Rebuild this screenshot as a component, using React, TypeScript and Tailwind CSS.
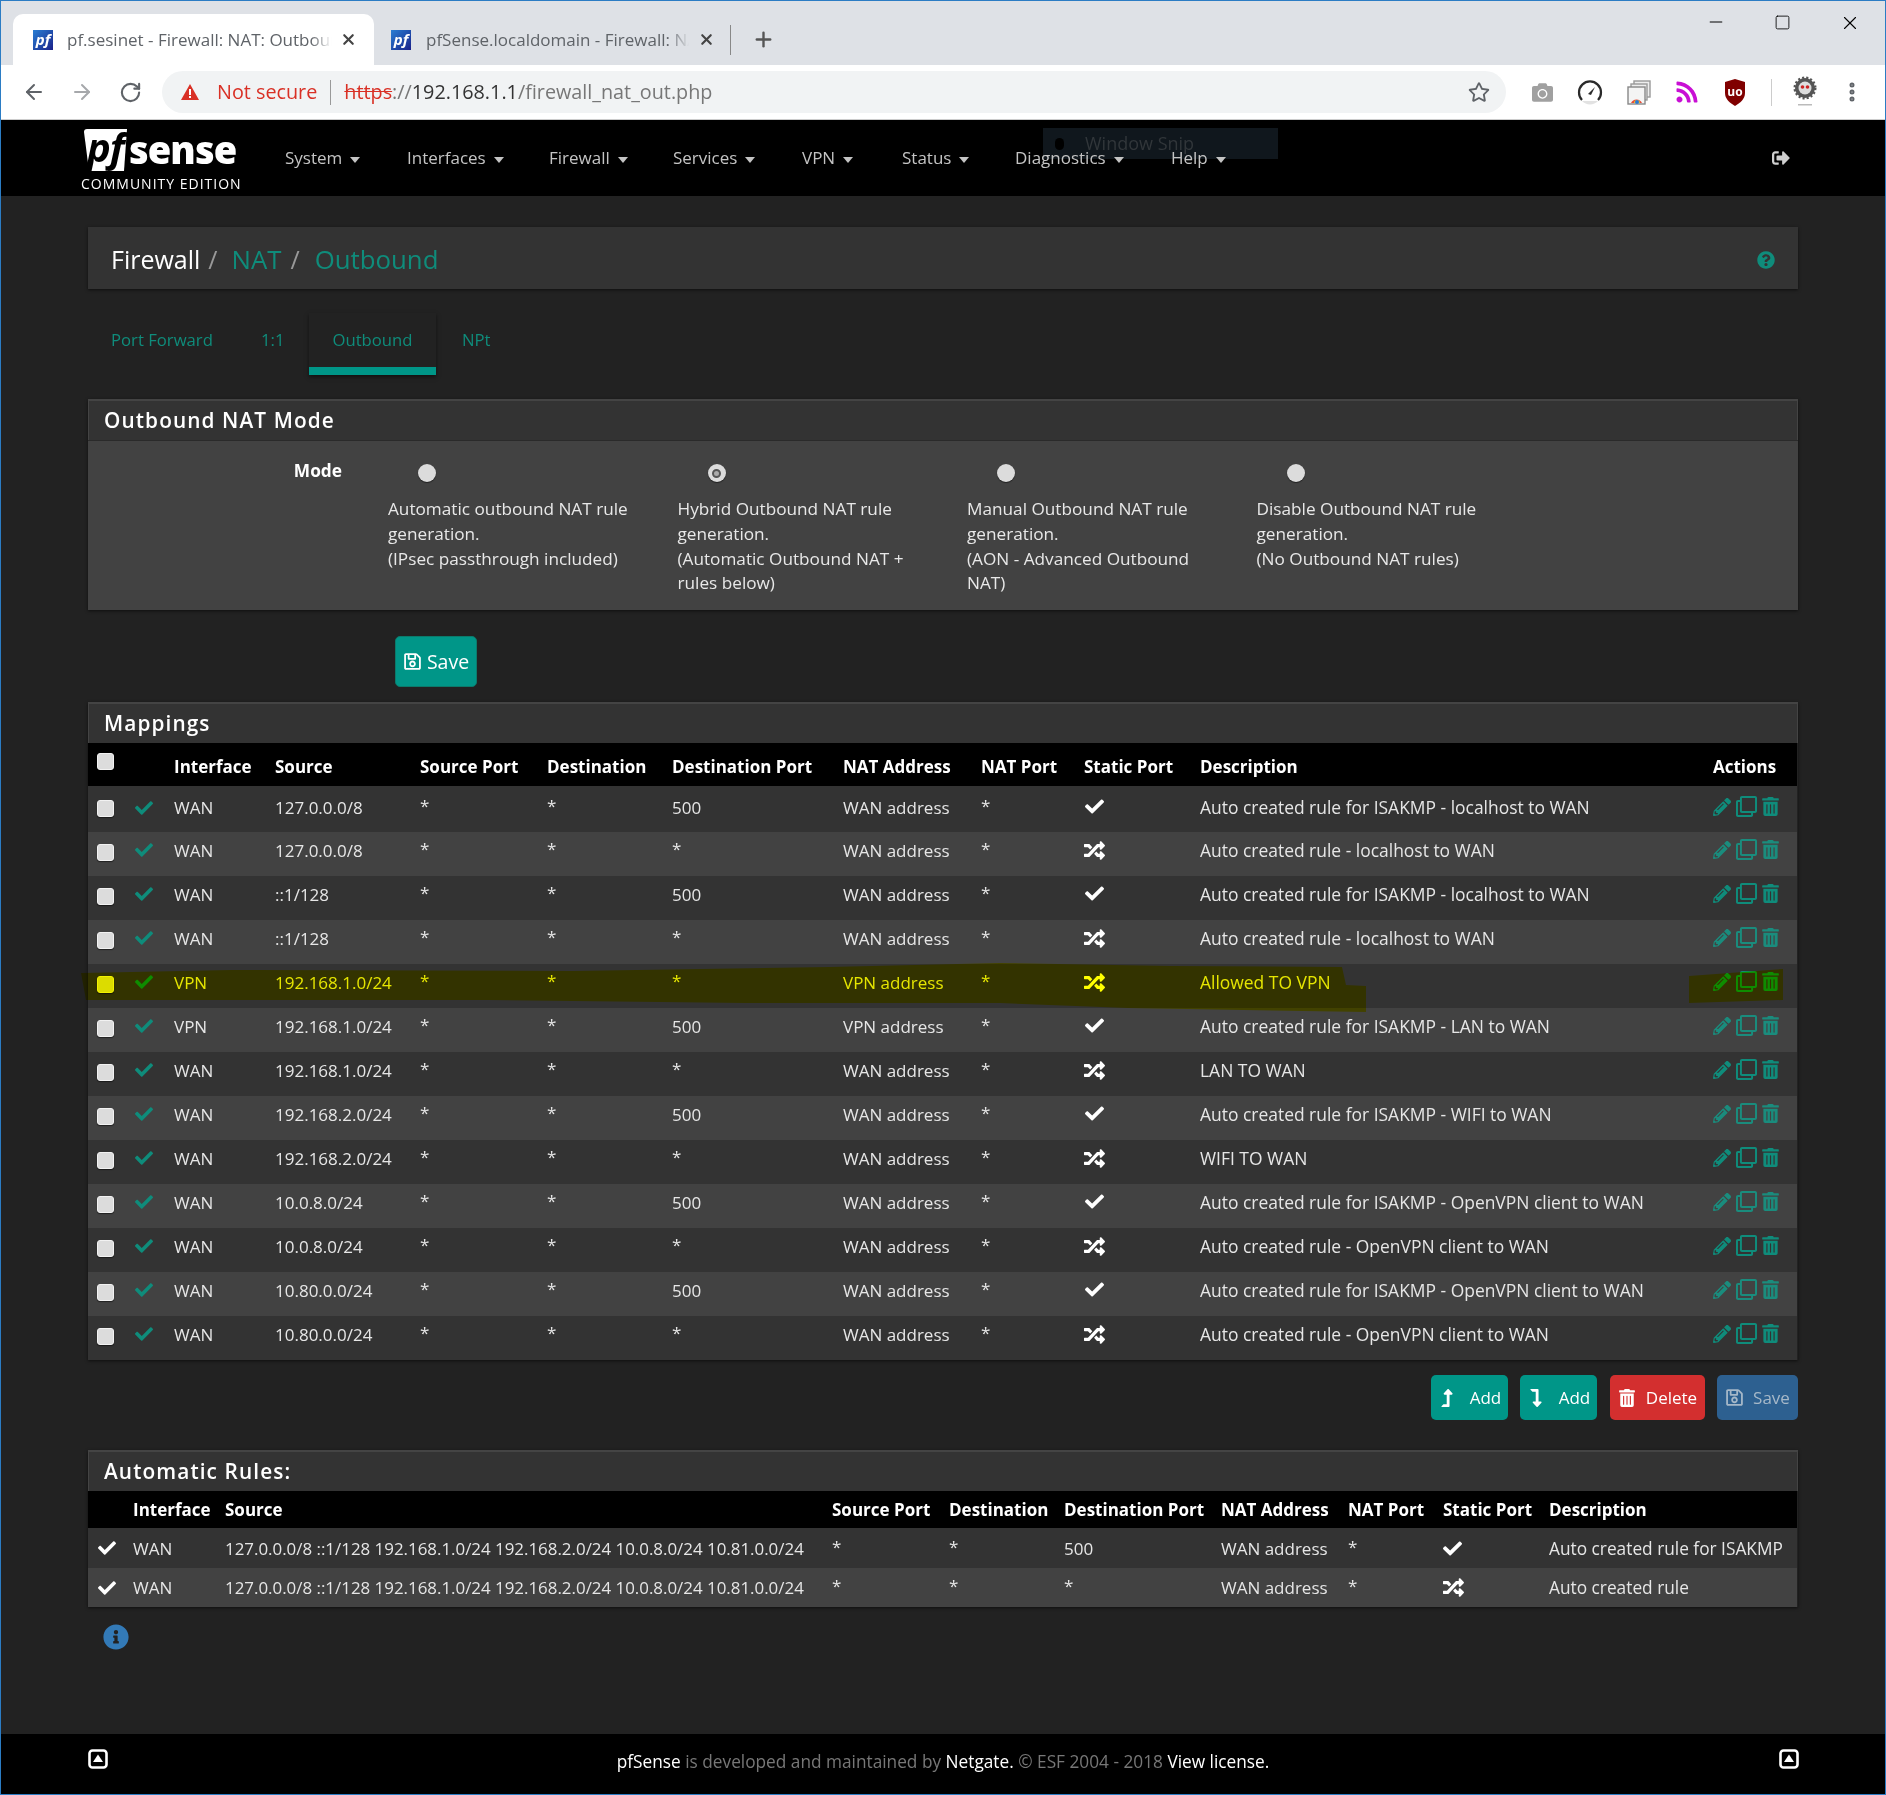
import React from "react";
import {
  FaCheck, FaRandom, FaPencilAlt, FaRegClone, FaTrashAlt, FaRegSave, FaLevelUpAlt, FaLevelDownAlt,
  FaQuestionCircle, FaInfoCircle, FaSignOutAlt, FaCamera, FaRss, FaRegStar,
} from "react-icons/fa";
import { ArrowLeft, ArrowRight, RotateCw, X, Plus, Minus, Square, EllipsisVertical } from "lucide-react";

const TEAL = "text-[#0f8c7b]";

function Box({ tone = "bg-[#dcdcdc]" }: { tone?: string }) {
  return <span className={`block h-[17px] w-[17px] rounded-[3px] ${tone} border border-[#f2f2f2] shadow-[0_1px_1px_rgba(0,0,0,.5)]`} />;
}

function Favicon() {
  return (
    <span className="flex h-[20px] w-[20px] items-center justify-center bg-gradient-to-br from-[#2a7ed3] to-[#1b1f8a] text-[15px] font-bold italic leading-none text-white">
      pf
    </span>
  );
}

function Chrome() {
  return (
    <div className="shrink-0">
      <div className="flex h-[64px] items-end bg-[#dee1e6]">
        <div className="ml-[12px] flex h-[51px] w-[361px] items-center rounded-t-[10px] bg-white pl-[20px]">
          <Favicon />
          <span className="ml-[14px] w-[265px] overflow-hidden whitespace-nowrap text-[17px] text-[#5f6368] [mask-image:linear-gradient(to_right,black_92%,transparent)]">
            pf.sesinet - Firewall: NAT: Outbound
          </span>
          <X size={17} strokeWidth={3} className="ml-[8px] text-[#444]" />
        </div>
        <div className="flex h-[51px] items-center pl-[17px]">
          <Favicon />
          <span className="ml-[15px] w-[263px] overflow-hidden whitespace-nowrap text-[17px] text-[#5f6368] [mask-image:linear-gradient(to_right,black_92%,transparent)]">
            pfSense.localdomain - Firewall: NAT
          </span>
          <X size={17} strokeWidth={3} className="ml-[9px] text-[#444]" />
          <span className="ml-[15px] h-[30px] w-px bg-[#888]" />
          <Plus size={23} strokeWidth={2.5} className="ml-[21px] text-[#555]" />
        </div>
        <div className="ml-auto flex h-[64px] items-start pt-[11px] text-black">
          <Minus size={20} strokeWidth={1.2} className="mr-[48px]" />
          <Square size={17} strokeWidth={1.2} className="mr-[48px] mt-[2px]" />
          <X size={22} strokeWidth={1.2} className="mr-[24px]" />
        </div>
      </div>
      <div className="flex h-[55px] items-center border-b border-[#ccc] bg-white">
        <ArrowLeft size={24} strokeWidth={2} className="ml-[21px] text-[#5f6368]" />
        <ArrowRight size={24} strokeWidth={2} className="ml-[24px] text-[#a6a8ab]" />
        <RotateCw size={23} strokeWidth={2.2} className="ml-[25px] text-[#5f6368]" />
        <div className="ml-[20px] flex h-[42px] w-[1344px] items-center rounded-full bg-[#f1f3f4] pl-[18px] text-[19.8px] leading-none">
          <svg width="20" height="18" viewBox="0 0 20 18"><path d="M10 1 L19 17 H1 Z" fill="#d93025" /><rect x="9" y="6" width="2" height="6" fill="#fff" /><rect x="9" y="13" width="2" height="2" fill="#fff" /></svg>
          <span className="ml-[17px] text-[#d93025]">Not secure</span>
          <span className="ml-[13px] h-[25px] w-px bg-[#999]" />
          <span className="ml-[13px] text-[#d93025] line-through">https</span>
          <span className="text-[#777]">://</span>
          <span className="text-[#333]">192.168.1.1</span>
          <span className="text-[#777]">/firewall_nat_out.php</span>
          <FaRegStar size={22} className="ml-auto mr-[16px] text-[#5f6368]" />
        </div>
        <FaCamera size={21} className="ml-[26px] text-[#a0a0a0]" />
        <svg width="26" height="26" viewBox="0 0 26 26" className="ml-[24px]">
          <path d="M5 22 A11 11 0 0 0 21 22 Z" fill="#e2e2e2" />
          <path d="M5 21 A11 11 0 1 1 21 21" fill="none" stroke="#2a2a2a" strokeWidth="2.2" />
          <path d="M11 15 L18 8 L14 16 Z" fill="#2a2a2a" />
        </svg>
        <svg width="24" height="25" viewBox="0 0 24 25" className="ml-[24px]">
          <rect x="7" y="1" width="16" height="16" fill="#eee" stroke="#999" strokeWidth="1.4" />
          <rect x="4" y="4" width="16" height="16" fill="#eee" stroke="#999" strokeWidth="1.4" />
          <rect x="1" y="7" width="17" height="17" fill="#f4f4f4" stroke="#888" strokeWidth="1.4" />
          <path d="M4 23 A6 6 0 0 1 15 23 Z" fill="#e8503a" />
          <path d="M7 23 A3 3 0 0 1 13 23 Z" fill="#f2c230" />
          <circle cx="10" cy="22" r="2" fill="#2b7bd4" />
        </svg>
        <FaRss size={24} className="ml-[24px] text-[#c80fd4]" />
        <svg width="22" height="27" viewBox="0 0 22 27" className="ml-[25px]">
          <path d="M11 0 L21 3 V14 C21 20 16 24 11 27 C6 24 1 20 1 14 V3 Z" fill="#800000" />
          <text x="11" y="17" textAnchor="middle" fontSize="12" fontWeight="700" fill="#fff" fontFamily="Open Sans">uo</text>
        </svg>
        <span className="ml-[25px] h-[27px] w-px bg-[#ccc]" />
        <svg width="26" height="32" viewBox="0 0 26 32" className="ml-[20px]">
          <circle cx="13" cy="12" r="10" fill="#555" strokeDasharray="2 2" stroke="#555" strokeWidth="3" />
          <circle cx="13" cy="12" r="6.5" fill="#ddd" />
          <circle cx="10.5" cy="11" r="1.8" fill="#c22" />
          <circle cx="15.5" cy="11" r="1.8" fill="#c22" />
          <rect x="6" y="28" width="14" height="1.5" fill="#bbb" />
        </svg>
        <EllipsisVertical size={24} strokeWidth={3} className="ml-[22px] text-[#5f6368]" />
      </div>
    </div>
  );
}

const navItems: [string, string][] = [
  ["System", "w-[122px]"],
  ["Interfaces", "w-[142px]"],
  ["Firewall", "w-[124px]"],
  ["Services", "w-[129px]"],
  ["VPN", "w-[100px]"],
  ["Status", "w-[113px]"],
  ["Diagnostics", "w-[156px]"],
  ["Help", "w-[80px]"],
];

function CaretBox({ className }: { className: string }) {
  return (
    <svg width="20" height="20" viewBox="0 0 20 20" className={className}>
      <rect x="1.5" y="1.5" width="17" height="17" rx="3" fill="none" stroke="#fff" strokeWidth="2.6" />
      <path d="M10 5.5 L15 13 H5 Z" fill="#fff" />
    </svg>
  );
}

function Navbar() {
  return (
    <div className="relative flex h-[76px] shrink-0 bg-black">
      <div className="absolute left-[1042px] top-[8px] flex h-[31px] w-[235px] items-center bg-[#10171d] pl-[12px] text-[18px] text-[#31363a]">
        <span className="h-[12px] w-[9px] rounded-full bg-[#000]" />
        <span className="ml-[21px]">Window Snip</span>
      </div>
      <div className="relative ml-[79px] w-[205px]">
        <svg width="44" height="43" viewBox="0 0 44 43" className="absolute left-[3px] top-[9px]">
          <path d="M1 3 Q1 0 4 0 H44 L41 42 H6 Z" fill="#fff" />
        </svg>
        <span className="absolute left-[7px] top-[7px] text-[40px] font-bold italic leading-[40px] tracking-[-1px] text-black">pf</span>
        <span className="absolute left-[49px] top-[9px] text-[38px] font-extrabold leading-[40px] tracking-[-0.9px] text-white">sense</span>
        <span className="absolute left-[1px] top-[54px] whitespace-nowrap text-[14px] leading-[20px] tracking-[1px] text-white">COMMUNITY EDITION</span>
      </div>
      <div className="relative flex items-center text-[17px] text-[#c4c4c4]">
        {navItems.map(([name, w]) => (
          <span key={name} className={`${w} flex items-center`}>
            {name}
            <span className="ml-[8px] mt-[3px] h-0 w-0 border-x-[5px] border-t-[6px] border-x-transparent border-t-[#c4c4c4]" />
          </span>
        ))}
      </div>
      <FaSignOutAlt size={18} className="absolute left-[1771px] top-[29px] text-[#cfcfcf]" />
    </div>
  );
}

function Heading({ children }: { children: React.ReactNode }) {
  return (
    <div className="flex h-[41px] items-center border-x border-t-2 border-x-[#444] border-t-[#444] bg-[#333] pl-[15px] text-[20.8px] font-semibold tracking-[1.1px] text-white">
      {children}
    </div>
  );
}

function Button({ bg, text = "text-white", icon, label, w, gap = "ml-[8px]" }: { bg: string; text?: string; icon: React.ReactNode; label: string; w: string; gap?: string }) {
  return (
    <span className={`flex h-[45px] ${w} items-center justify-center rounded-[5px] ${bg} ${text} text-[17px]`}>
      {icon}
      <span className={gap}>{label}</span>
    </span>
  );
}

function ModeOption({ lines, checked }: { lines: string[]; checked?: boolean }) {
  return (
    <div className="w-[289.5px] text-[17.2px] leading-[24.8px] text-[#e8e8e8]">
      <div className="ml-[30px] flex h-[18px] w-[18px] items-center justify-center rounded-full bg-[#dcdcdc] shadow-[0_1px_1px_rgba(0,0,0,.5)]">
        {checked ? <span className="h-[9px] w-[9px] rounded-full border-2 border-[#555] bg-[#aaa]" /> : null}
      </div>
      <div className="mt-[15px]">
        {lines.map((l) => (
          <div key={l} className="whitespace-nowrap">{l}</div>
        ))}
      </div>
    </div>
  );
}

type Row = [string, string, string, string, boolean, string];

const rows: Row[] = [
  ["WAN", "127.0.0.0/8", "500", "WAN address", true, "Auto created rule for ISAKMP - localhost to WAN"],
  ["WAN", "127.0.0.0/8", "*", "WAN address", false, "Auto created rule - localhost to WAN"],
  ["WAN", "::1/128", "500", "WAN address", true, "Auto created rule for ISAKMP - localhost to WAN"],
  ["WAN", "::1/128", "*", "WAN address", false, "Auto created rule - localhost to WAN"],
  ["VPN", "192.168.1.0/24", "*", "VPN address", false, "Allowed TO VPN"],
  ["VPN", "192.168.1.0/24", "500", "VPN address", true, "Auto created rule for ISAKMP - LAN to WAN"],
  ["WAN", "192.168.1.0/24", "*", "WAN address", false, "LAN TO WAN"],
  ["WAN", "192.168.2.0/24", "500", "WAN address", true, "Auto created rule for ISAKMP - WIFI to WAN"],
  ["WAN", "192.168.2.0/24", "*", "WAN address", false, "WIFI TO WAN"],
  ["WAN", "10.0.8.0/24", "500", "WAN address", true, "Auto created rule for ISAKMP - OpenVPN client to WAN"],
  ["WAN", "10.0.8.0/24", "*", "WAN address", false, "Auto created rule - OpenVPN client to WAN"],
  ["WAN", "10.80.0.0/24", "500", "WAN address", true, "Auto created rule for ISAKMP - OpenVPN client to WAN"],
  ["WAN", "10.80.0.0/24", "*", "WAN address", false, "Auto created rule - OpenVPN client to WAN"],
];

const mapCols = ["w-[41px]", "w-[45px]", "w-[101px]", "w-[145px]", "w-[127px]", "w-[125px]", "w-[171px]", "w-[138px]", "w-[103px]", "w-[116px]", "w-[513px]", "w-[84px]"];
const mapHead = ["", "", "Interface", "Source", "Source Port", "Destination", "Destination Port", "NAT Address", "NAT Port", "Static Port", "Description", "Actions"];
const autoCols = ["w-[45px]", "w-[92px]", "w-[607px]", "w-[117px]", "w-[115px]", "w-[157px]", "w-[127px]", "w-[95px]", "w-[106px]", "w-[248px]"];
const autoHead = ["", "Interface", "Source", "Source Port", "Destination", "Destination Port", "NAT Address", "NAT Port", "Static Port", "Description"];

function MappingsTable() {
  return (
    <table className="w-[1709px] table-fixed border-collapse text-[17px] leading-[25px] text-[#e6e6e6]">
      <colgroup>
        {mapCols.map((c, i) => (
          <col key={i} className={c} />
        ))}
      </colgroup>
      <thead>
        <tr className="h-[43px] bg-black text-left font-bold text-white">
          {mapHead.map((h, i) => (
            <th key={i} className="p-0 align-middle">
              {i === 0 ? (
                <span className="ml-[9px] mt-[-7px] block"><Box /></span>
              ) : (
                <span className="block whitespace-nowrap pt-[3px]">{h}</span>
              )}
            </th>
          ))}
        </tr>
      </thead>
      <tbody>
        {rows.map((r, i) => (
          <tr key={i} className={`${i === 0 ? "h-[46px]" : "h-[44px]"} ${i % 2 ? "bg-[#424242]" : "bg-[#333]"}`}>
            <td className={`p-0 align-top ${i === 0 ? "pt-[14px]" : "pt-[12px]"}`}>
              <span className="ml-[9px] block"><Box /></span>
            </td>
            <td className={`p-0 align-top ${i === 0 ? "pt-[13px]" : "pt-[9px]"}`}>
              <FaCheck size={18} className={`ml-[6px] ${TEAL}`} />
            </td>
            {[r[0], r[1], "*", "*", r[2], r[3], "*"].map((v, j) => (
              <td key={j} className={`p-0 align-top whitespace-nowrap ${i === 0 ? "pt-[9px]" : "pt-[6px]"}`}>
                <span className={v === "*" ? "relative top-[-2px]" : ""}>{v}</span>
              </td>
            ))}
            <td className={`p-0 align-top ${i === 0 ? "pt-[11px]" : "pt-[8px]"}`}>
              {r[4] ? <FaCheck size={19} className="ml-[1px] text-white" /> : <FaRandom size={21} className="text-white" />}
            </td>
            <td className={`p-0 align-top whitespace-nowrap text-[17.45px] ${i === 0 ? "pt-[9px]" : "pt-[6px]"}`}>{r[5]}</td>
            <td className={`p-0 align-top ${i === 0 ? "pt-[10px]" : "pt-[7px]"}`}>
              <span className={`flex items-center ${i % 2 ? "text-[#1a8c7d]" : TEAL}`}>
                <FaPencilAlt size={18} />
                <FaRegClone size={21} className="ml-[5px]" />
                <FaTrashAlt size={19} className="ml-[4px]" />
              </span>
            </td>
          </tr>
        ))}
      </tbody>
    </table>
  );
}

function AutoTable() {
  const data: [boolean, string, string, string][] = [
    [true, "500", "Auto created rule for ISAKMP", "h-[40px] bg-[#333]"],
    [false, "*", "Auto created rule", "h-[39px] bg-[#424242]"],
  ];
  return (
    <table className="w-[1709px] table-fixed border-collapse text-[17px] leading-[25px] text-[#e6e6e6]">
      <colgroup>
        {autoCols.map((c, i) => (
          <col key={i} className={c} />
        ))}
      </colgroup>
      <thead>
        <tr className="h-[37px] bg-black text-left font-bold text-white">
          {autoHead.map((h, i) => (
            <th key={i} className="whitespace-nowrap p-0">{h}</th>
          ))}
        </tr>
      </thead>
      <tbody>
        {data.map((d, i) => (
          <tr key={i} className={d[3]}>
            <td className="p-0 align-middle"><FaCheck size={18} className="ml-[10px] text-white" /></td>
            <td className="p-0 align-middle">WAN</td>
            <td className="whitespace-nowrap p-0 align-middle text-[16.9px]">127.0.0.0/8 ::1/128 192.168.1.0/24 192.168.2.0/24 10.0.8.0/24 10.81.0.0/24</td>
            <td className="p-0 align-middle"><span className="relative top-[-2px]">*</span></td>
            <td className="p-0 align-middle"><span className="relative top-[-2px]">*</span></td>
            <td className="p-0 align-middle"><span className={d[1] === "*" ? "relative top-[-2px]" : ""}>{d[1]}</span></td>
            <td className="p-0 align-middle">WAN address</td>
            <td className="p-0 align-middle"><span className="relative top-[-2px]">*</span></td>
            <td className="p-0 align-middle">
              {d[0] ? <FaCheck size={19} className="text-white" /> : <FaRandom size={21} className="text-white" />}
            </td>
            <td className="whitespace-nowrap p-0 align-middle text-[17.3px]">{d[2]}</td>
          </tr>
        ))}
      </tbody>
    </table>
  );
}

export default function App() {
  return (
    <div className="relative flex h-[1795px] w-[1886px] flex-col overflow-hidden border border-[#2b7cc4] bg-[#222] font-['Open_Sans',sans-serif]">
      <Chrome />
      <Navbar />
      <main className="flex flex-1 flex-col pl-[87px] pr-[87px] pt-[31px]">
        <div className="flex h-[62px] items-center justify-between bg-[#333] pl-[23px] pr-[23px] pt-[3px] text-[25px] shadow-[0_1px_3px_rgba(0,0,0,.6)]">
          <div className="flex items-center">
            <span className="text-white">Firewall</span>
            <span className="ml-[8px] text-[#999]">/</span>
            <span className={`ml-[14px] text-[25.8px] ${TEAL}`}>NAT</span>
            <span className="ml-[9px] text-[#999]">/</span>
            <span className={`ml-[15px] text-[25.8px] ${TEAL}`}>Outbound</span>
          </div>
          <FaQuestionCircle size={18} className={TEAL} />
        </div>

        <div className={`mt-[24px] flex h-[62px] text-[16.7px] ${TEAL}`}>
          <span className="flex w-[173px] items-center pb-[8px] pl-[23px]">Port Forward</span>
          <span className="flex w-[48px] items-center pb-[8px] pl-[0px]">1:1</span>
          <span className="flex w-[127px] items-center justify-center border-b-[8px] border-[#009688] shadow-[0_2px_4px_rgba(0,0,0,.5)]">Outbound</span>
          <span className="flex items-center pb-[8px] pl-[26px]">NPt</span>
        </div>

        <div className="mt-[24px] shadow-[0_1px_3px_rgba(0,0,0,.6)]">
          <Heading>Outbound NAT Mode</Heading>
          <div className="flex h-[170px] border-t border-[#2a2a2a] bg-[#424242] pt-[23px]">
            <div className="mt-[-6px] w-[254px] text-right text-[17.3px] font-bold leading-[25px] text-white">Mode</div>
            <div className="ml-[46px] flex">
              <ModeOption lines={["Automatic outbound NAT rule", "generation.", "(IPsec passthrough included)"]} />
              <ModeOption checked lines={["Hybrid Outbound NAT rule", "generation.", "(Automatic Outbound NAT +", "rules below)"]} />
              <ModeOption lines={["Manual Outbound NAT rule", "generation.", "(AON - Advanced Outbound", "NAT)"]} />
              <ModeOption lines={["Disable Outbound NAT rule", "generation.", "(No Outbound NAT rules)"]} />
            </div>
          </div>
        </div>

        <div className="mt-[26px] pl-[307px]">
          <span className="flex h-[51px] w-[82px] items-center justify-center rounded-[5px] border border-[#0c7a6b] bg-[#009688] text-[19.5px] text-white">
            <FaRegSave size={19} />
            <span className="ml-[5px]">Save</span>
          </span>
        </div>

        <div className="mt-[15px] shadow-[0_1px_3px_rgba(0,0,0,.6)]">
          <Heading>Mappings</Heading>
          <MappingsTable />
        </div>

        <div className="mt-[15px] flex justify-end">
          <Button bg="bg-[#009688]" w="w-[77px]" icon={<FaLevelUpAlt size={18} />} label="Add" gap="ml-[14px]" />
          <span className="ml-[12px]" />
          <Button bg="bg-[#009688]" w="w-[77px]" icon={<FaLevelDownAlt size={18} />} label="Add" gap="ml-[14px]" />
          <span className="ml-[13px]" />
          <Button bg="bg-[#d32f2f]" w="w-[95px]" icon={<FaTrashAlt size={18} />} label="Delete" gap="ml-[10px]" />
          <span className="ml-[12px]" />
          <Button bg="bg-[#2d6090]" text="text-[#a6b8c8]" w="w-[81px]" icon={<FaRegSave size={19} />} label="Save" gap="ml-[9px]" />
        </div>

        <div className="mt-[30px] shadow-[0_1px_3px_rgba(0,0,0,.6)]">
          <Heading>Automatic Rules:</Heading>
          <AutoTable />
        </div>

        <FaInfoCircle size={26} className="ml-[15px] mt-[17px] text-[#337ab7]" />
      </main>

      <footer className="relative flex h-[60px] shrink-0 items-center justify-center bg-black pb-[4px] text-[17.25px] text-[#777]">
        <CaretBox className="absolute left-[87px] top-[15px]" />
        <span className="whitespace-nowrap">
          <span className="text-white">pfSense</span> is developed and maintained by <span className="text-white">Netgate.</span> © ESF 2004 - 2018 <span className="text-white">View license.</span>
        </span>
        <CaretBox className="absolute left-[1778px] top-[15px]" />
      </footer>

      <svg width="1886" height="1795" viewBox="0 0 1886 1795" className="pointer-events-none absolute left-[-1px] top-[-1px] mix-blend-multiply">
        <polygon points="81,973 231,970 573,971 829,967 1000,963 1171,966 1342,967 1346,985 1366,986 1366,1012 1128,1008 1000,1003 744,1003 487,1000 316,1000 86,1000" fill="#ffff00" />
        <polygon points="1689,976 1783,969 1783,1000 1689,1003" fill="#ffff00" />
      </svg>
    </div>
  );
}
